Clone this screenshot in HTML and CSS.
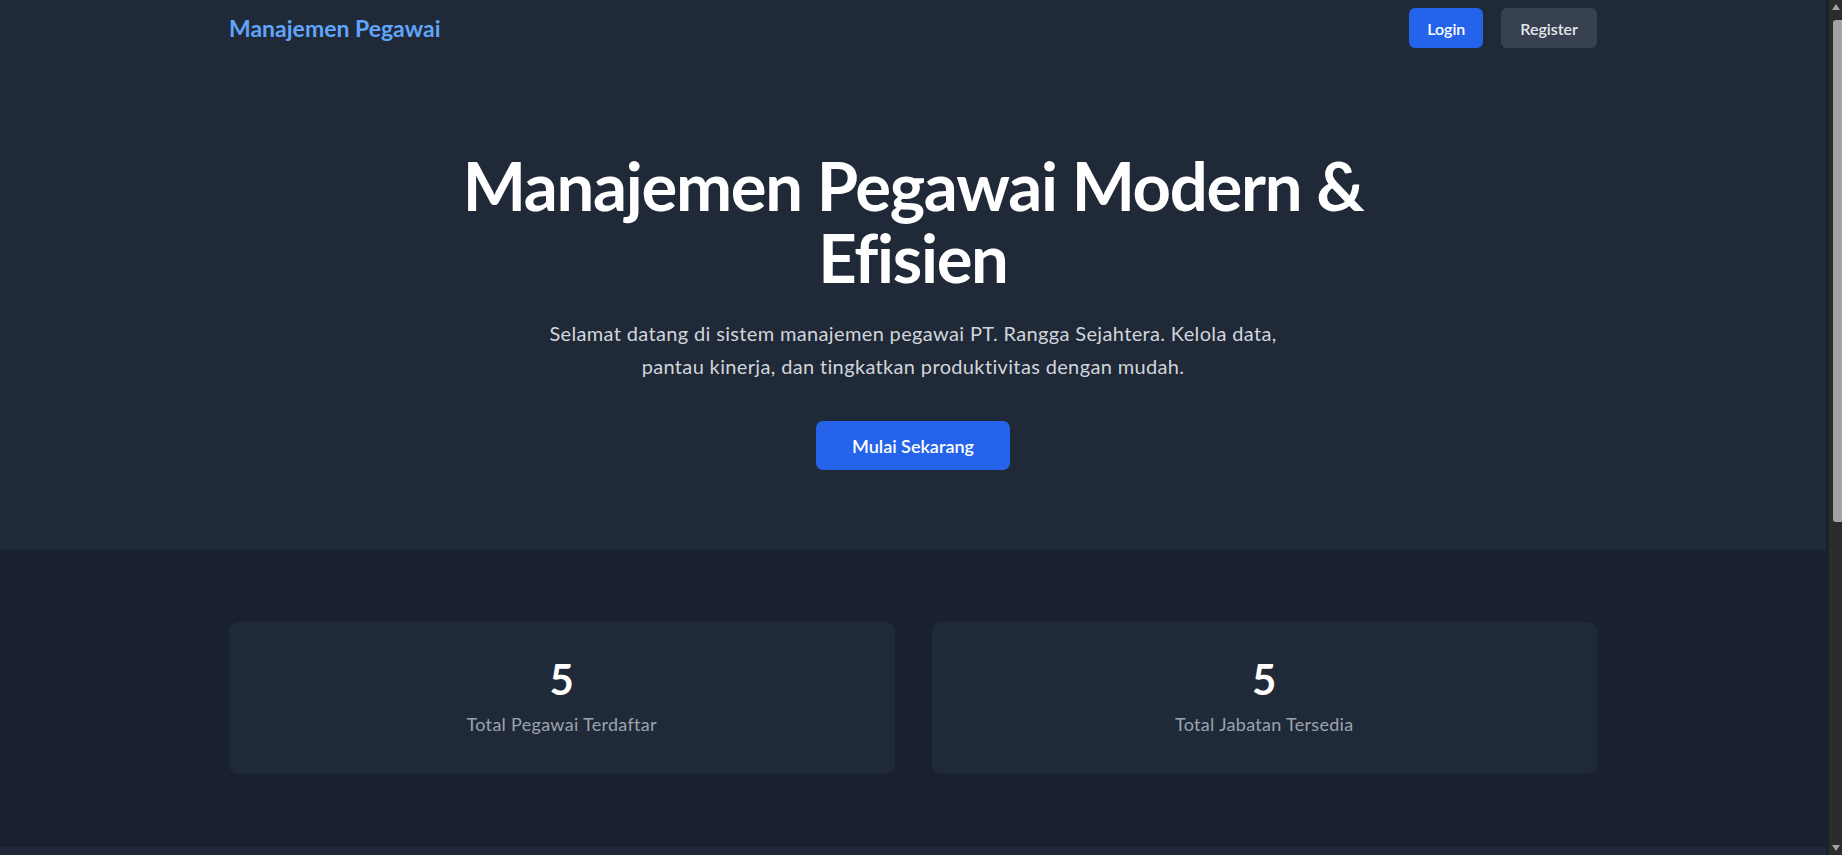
FILE: index.html
```html
<!DOCTYPE html>
<html lang="id">
<head>
<meta charset="utf-8">
<title>Manajemen Pegawai</title>
<link rel="stylesheet" href="styles.css">
</head>
<body>
<header class="top">
  <nav class="nav container">
    <a class="brand" href="#">Manajemen Pegawai</a>
    <div class="nav-actions">
      <a class="btn btn-primary" href="#">Login</a>
      <a class="btn btn-secondary" href="#">Register</a>
    </div>
  </nav>
  <section class="hero">
    <h1 class="hero-title">Manajemen Pegawai Modern &amp; Efisien</h1>
    <p class="hero-text">Selamat datang di sistem manajemen pegawai PT. Rangga Sejahtera. Kelola data, pantau kinerja, dan tingkatkan produktivitas dengan mudah.</p>
    <a class="btn-cta" href="#">Mulai Sekarang</a>
  </section>
</header>
<section class="stats">
  <div class="stats-grid container">
    <div class="stat-card">
      <div class="stat-num">5</div>
      <div class="stat-label">Total Pegawai Terdaftar</div>
    </div>
    <div class="stat-card">
      <div class="stat-num">5</div>
      <div class="stat-label">Total Jabatan Tersedia</div>
    </div>
  </div>
</section>
<footer class="footer"></footer>
<div class="scrollbar" aria-hidden="true">
  <span class="sb-arrow sb-up"></span>
  <span class="sb-thumb"></span>
  <span class="sb-arrow sb-down"></span>
</div>
</body>
</html>
```
FILE: styles.css
```css
* { box-sizing: border-box; }
html { background: #192130; }
body {
  margin: 0;
  padding-right: 16px;
  font-family: "Lato", "Inter", sans-serif;
  color: #ffffff;
  background: #192130;
}
a { text-decoration: none; }

.container {
  max-width: 1368px;
  margin: 0 auto;
}

.top { background: #1f2937; }

.nav {
  height: 56px;
  display: flex;
  align-items: center;
  justify-content: space-between;
}
.brand {
  color: #60a5fa;
  font-size: 23px;
  font-weight: 700;
}
.nav-actions {
  display: flex;
  gap: 18px;
}
.btn {
  height: 40px;
  display: inline-flex;
  align-items: center;
  padding: 0 18px;
  border-radius: 6px;
  font-size: 16px;
  font-weight: 600;
}
.btn-primary { background: #2563eb; color: #ffffff; }
.btn-secondary { background: #374151; color: #e5e7eb; padding: 0 19px; }

.hero {
  display: flex;
  flex-direction: column;
  align-items: center;
  text-align: center;
  padding: 93px 24px 80px;
}
.hero-title {
  margin: 0;
  max-width: 1024px;
  font-size: 67px;
  line-height: 72px;
  letter-spacing: -1.3px;
  font-weight: 700;
  color: #ffffff;
}
.hero-text {
  margin: 24px 0 0;
  max-width: 768px;
  font-size: 20px;
  line-height: 32.5px;
  letter-spacing: 0.35px;
  color: #d1d5db;
}
.btn-cta {
  margin-top: 39px;
  height: 49px;
  width: 194px;
  display: inline-flex;
  align-items: center;
  justify-content: center;
  border-radius: 7px;
  background: #2563eb;
  color: #ffffff;
  font-size: 18px;
  font-weight: 600;
}

.stats {
  padding: 72px 0 73px;
  background: #192130;
}
.stats-grid {
  display: grid;
  grid-template-columns: 1fr 1fr;
  gap: 37px;
}
.stat-card {
  background: #1f2937;
  border-radius: 9px;
  padding: 36px 24px 36px;
  text-align: center;
}
.stat-num {
  font-size: 42px;
  line-height: 42px;
  font-weight: 700;
  color: #ffffff;
}
.stat-label {
  margin-top: 10px;
  font-size: 18px;
  line-height: 28px;
  letter-spacing: 0.3px;
  color: #9ca3af;
}

.footer {
  background: #1f2937;
  height: 558px;
}

/* imitation of the browser's scrollbar, drawn over the right edge */
.scrollbar {
  position: fixed;
  top: 0;
  right: 0;
  width: 13px;
  height: 100vh;
  background: #2c2c2c;
  display: flex;
  flex-direction: column;
  align-items: flex-end;
}
.sb-arrow {
  display: block;
  width: 13px;
  height: 17px;
  position: relative;
}
.sb-up::after,
.sb-down::after {
  content: "";
  position: absolute;
  left: 3px;
  border-left: 4px solid transparent;
  border-right: 4px solid transparent;
}
.sb-up::after {
  top: 4px;
  border-bottom: 6px solid #a3a3a3;
}
.sb-down::after {
  bottom: 4px;
  border-top: 6px solid #a3a3a3;
}
.sb-thumb {
  display: block;
  width: 9px;
  height: 502px;
  margin-top: 3px;
  background: #a3a3a3;
  border-radius: 3px 0 0 3px;
}
.sb-down { margin-top: auto; }
```
